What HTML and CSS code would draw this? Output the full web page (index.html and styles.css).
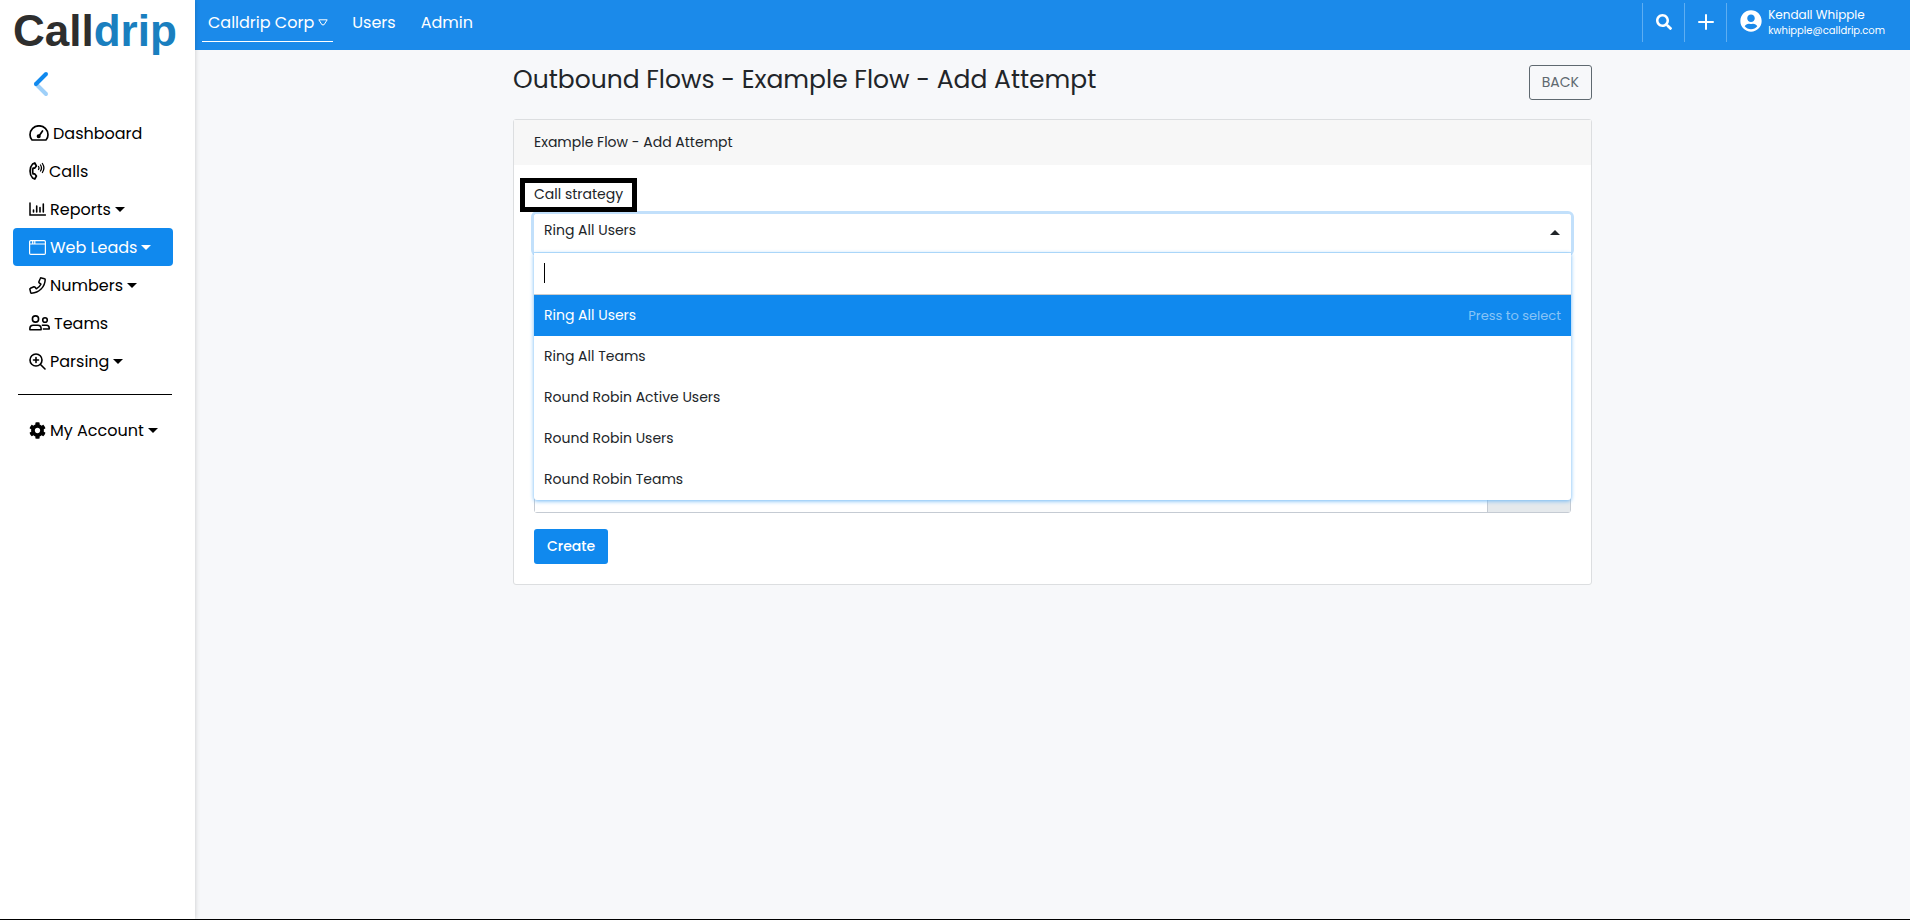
FILE: index.html
```html
<!DOCTYPE html>
<html lang="en">
<head>
  <meta charset="UTF-8" />
  <meta name="viewport" content="width=device-width, initial-scale=1.0"/>
  <title>Calldrip - Add Attempt</title>
  <link rel="stylesheet" href="styles.css">
</head>
<body>
  <aside class="sidebar">
    <a href="#" class="logo">Call<span>drip</span></a>
    <button type="button" class="collapse" aria-label="Collapse menu">
      <svg width="16" height="26" viewBox="0 0 16 26" fill="none" stroke-width="4" stroke-linecap="round">
        <path d="M3 13l10 10" stroke="#9fd0f9"/>
        <path d="M13 3L3 13" stroke="#1089ee"/>
      </svg>
    </button>
    <nav class="menu">
      <a href="#">
        <svg width="20" height="16" viewBox="0 0 20 16" fill="none" stroke="currentColor" stroke-width="1.7" stroke-linecap="round" stroke-linejoin="round">
          <path d="M3 15C1.600 13.600 1 11.800 1 9.800a9 9 0 0 1 18 0c0 2-.6 3.800-2 5.200z"/>
          <path d="M10 11l3.500-5"/>
          <circle cx="9.700" cy="11.200" r="1.200" fill="currentColor"/>
        </svg>
        Dashboard
      </a>
      <a href="#">
        <svg width="16" height="18" viewBox="0 0 16 18" fill="none" stroke="currentColor" stroke-width="1.700" stroke-linecap="round" stroke-linejoin="round">
          <path d="M5.800 1L3.600 2C.2 5.500.2 12.500 3.600 16l2.200 1 1.600-3-1.800-2.200-1.500.2c-.6-2-.6-4 0-6l1.500.2L7.400 4z"/>
          <path d="M9.500 4.500q1 1.500 0 3M11.500 3q2 3 0 6M13.400 1.500q3 4.500 0 9" stroke-width="1.300"/>
        </svg>
        Calls
      </a>
      <a href="#">
        <svg width="17" height="14" viewBox="0 0 17 14" fill="none" stroke="currentColor" stroke-width="1.500" stroke-linecap="round">
          <path d="M1 1v12h15.500"/>
          <path d="M4.500 8v2M7.700 4v6M11 5.500V10M14.300 2v8" stroke-width="1.600"/>
        </svg>
        Reports <i class="caret"></i>
      </a>
      <a href="#" class="active">
        <svg width="17" height="15" viewBox="0 0 17 15" fill="none" stroke="currentColor" stroke-width="1.200">
          <rect x=".6" y=".6" width="15.800" height="13.800" rx="1.200"/>
          <path d="M1 4h15M3.700 1v3M5.800 1v3"/>
        </svg>
        Web Leads <i class="caret"></i>
      </a>
      <a href="#">
        <svg width="17" height="17" viewBox="0 0 17 17" fill="none" stroke="currentColor" stroke-width="1.500" stroke-linejoin="round">
          <path d="M12.300.9l3.300.8c.5 0 .6.400.6.800C16 10 10 16 2.500 16.200c-.4 0-.7-.2-.8-.6L.9 12.300c-.1-.4.1-.8.5-1l3.500-1.500c.4-.1.700 0 1 .3l1.400 1.700c2-1 3.600-2.500 4.600-4.600l-1.700-1.400c-.3-.2-.4-.6-.3-1l1.500-3.500c.1-.3.500-.5.900-.4z"/>
        </svg>
        Numbers <i class="caret"></i>
      </a>
      <a href="#">
        <svg width="21" height="16" viewBox="0 0 21 16" fill="none" stroke="currentColor" stroke-width="1.600" stroke-linejoin="round">
          <circle cx="6.500" cy="4" r="3.100"/>
          <circle cx="16" cy="5" r="2.300"/>
          <path d="M.9 14.800v-1.300c0-2 1.500-3.300 3.300-3.300h4.600c1.800 0 3.300 1.300 3.300 3.300v1.300zM12.800 10.200h4.700c1.700 0 2.700 1.100 2.700 2.700v1.100h-6.400"/>
        </svg>
        Teams
      </a>
      <a href="#">
        <svg width="17" height="17" viewBox="0 0 17 17" fill="none" stroke="currentColor" stroke-width="1.600" stroke-linecap="round">
          <circle cx="7" cy="7" r="6"/>
          <path d="M11.500 11.500L16 16M7 4.500v5M4.500 7h5"/>
        </svg>
        Parsing <i class="caret"></i>
      </a>
      <hr>
      <a href="#">
        <svg width="17" height="17" viewBox="0 0 512 512" fill="currentColor">
          <path d="M487.400 315.700l-42.600-24.600c4.300-23.200 4.300-47 0-70.200l42.600-24.600c4.900-2.800 7.100-8.600 5.500-14-11.100-35.600-30-67.800-54.700-94.600-3.800-4.100-10-5.100-14.800-2.300L380.800 110c-17.900-15.400-38.500-27.300-60.800-35.100V25.800c0-5.600-3.900-10.500-9.400-11.700-36.700-8.200-74.300-7.800-109.200 0-5.500 1.200-9.400 6.100-9.400 11.700V75c-22.200 7.900-42.800 19.800-60.800 35.100L88.700 85.500c-4.900-2.800-11-1.900-14.800 2.300-24.700 26.700-43.600 58.900-54.700 94.600-1.700 5.400.6 11.200 5.500 14L67.300 221c-4.300 23.200-4.300 47 0 70.200l-42.600 24.600c-4.900 2.800-7.100 8.600-5.500 14 11.100 35.600 30 67.800 54.700 94.600 3.800 4.100 10 5.100 14.800 2.300l42.600-24.600c17.900 15.400 38.500 27.300 60.800 35.100v49.200c0 5.600 3.900 10.500 9.400 11.700 36.700 8.200 74.300 7.800 109.200 0 5.500-1.200 9.400-6.100 9.400-11.700v-49.200c22.200-7.900 42.800-19.800 60.800-35.100l42.600 24.600c4.900 2.800 11 1.900 14.800-2.300 24.700-26.700 43.600-58.900 54.700-94.600 1.500-5.500-.7-11.300-5.600-14.100zM256 336c-44.100 0-80-35.900-80-80s35.900-80 80-80 80 35.900 80 80-35.900 80-80 80z"/>
        </svg>
        My Account <i class="caret"></i>
      </a>
    </nav>
  </aside>

  <div class="page">
    <header class="topbar">
      <nav class="topnav">
        <a href="#" class="current">Calldrip Corp
          <svg width="10" height="7" viewBox="0 0 10 7" fill="none" stroke="currentColor" stroke-linejoin="round"><path d="M.8.800h8.400L6 5.800H4z"/></svg>
        </a>
        <a href="#">Users</a>
        <a href="#">Admin</a>
      </nav>
      <div class="tools">
        <button type="button" class="tool" aria-label="Search">
          <svg width="16" height="16" viewBox="0 0 512 512" fill="currentColor"><path d="M505 442.700L405.300 343c-4.500-4.500-10.600-7-17-7H372c27.600-35.300 44-79.700 44-128C416 93.100 322.900 0 208 0S0 93.100 0 208s93.100 208 208 208c48.300 0 92.700-16.400 128-44v16.300c0 6.400 2.500 12.500 7 17l99.700 99.700c9.400 9.400 24.600 9.400 33.900 0l28.300-28.300c9.400-9.400 9.400-24.600.1-34zM208 336c-70.700 0-128-57.200-128-128 0-70.700 57.200-128 128-128 70.700 0 128 57.200 128 128 0 70.700-57.200 128-128 128z"/></svg>
        </button>
        <button type="button" class="tool" aria-label="Add">
          <svg width="16" height="16" viewBox="0 0 16 16" stroke="currentColor" stroke-width="2" stroke-linecap="round"><path d="M8 1v14M1 8h14"/></svg>
        </button>
        <a href="#" class="user">
          <svg width="22" height="22" viewBox="0 0 496 512" fill="currentColor"><path d="M248 8C111 8 0 119 0 256s111 248 248 248 248-111 248-248S385 8 248 8zm0 96c48.600 0 88 39.400 88 88s-39.400 88-88 88-88-39.400-88-88 39.400-88 88-88zm0 344c-58.700 0-111.300-26.600-146.500-68.200 18.800-35.400 55.600-59.800 98.500-59.800 2.400 0 4.800.4 7.100 1.100 13 4.200 26.600 6.900 40.900 6.900 14.300 0 28-2.700 40.900-6.900 2.300-.7 4.700-1.100 7.100-1.100 42.900 0 79.700 24.400 98.500 59.800C359.300 421.400 306.700 448 248 448z"/></svg>
          <span class="who">
            <strong>Kendall Whipple</strong>
            <small>kwhipple@calldrip.com</small>
          </span>
        </a>
      </div>
    </header>

    <main class="container">
      <div class="title-row">
        <h1>Outbound Flows - Example Flow - Add Attempt</h1>
        <button type="button" class="btn-outline">BACK</button>
      </div>

      <section class="card">
        <div class="card-header">Example Flow - Add Attempt</div>
        <form class="card-body">
          <label for="strategy" class="highlight">Call strategy</label>
          <div class="dropdown">
            <select id="strategy" name="strategy">
              <option>Ring All Users</option>
              <option>Ring All Teams</option>
              <option>Round Robin Active Users</option>
              <option>Round Robin Users</option>
              <option>Round Robin Teams</option>
            </select>
            <i class="caret up"></i>
            <div class="dropdown-menu">
              <input type="text" class="search" aria-label="Search strategies">
              <ul>
                <li class="selected">Ring All Users <span>Press to select</span></li>
                <li>Ring All Teams</li>
                <li>Round Robin Active Users</li>
                <li>Round Robin Users</li>
                <li>Round Robin Teams</li>
              </ul>
            </div>
          </div>
          <div class="input-group">
            <input type="text" name="delay" aria-label="Delay">
            <span class="addon"></span>
          </div>
          <button type="submit" class="btn">Create</button>
        </form>
      </section>
    </main>
  </div>
</body>
</html>
```
FILE: styles.css
```css
* {
  box-sizing: border-box;
}

body {
  margin: 0;
  display: flex;
  min-height: 100vh;
  font-family: Poppins, Inter, sans-serif;
  font-size: 14px;
  line-height: 21px;
  color: #212529;
  background-color: #f7f8fa;
  border-bottom: 1px solid #000;
}

a {
  color: inherit;
  text-decoration: none;
}

button, input, select {
  font: inherit;
  color: inherit;
}

svg {
  flex: none;
}

/* Sidebar */
.sidebar {
  width: 195px;
  flex: none;
  background-color: #fff;
  box-shadow: 0 0 5px rgba(0, 0, 0, 0.2);
  position: relative;
}

.logo {
  display: block;
  padding: 6px 0 0 13px;
  font-family: "Liberation Sans", sans-serif;
  font-size: 44px;
  line-height: 49px;
  font-weight: bold;
  color: #2e2e2e;
}

.logo span {
  color: #1a7fbf;
}

.collapse {
  display: block;
  margin: 16px 0 0 33px;
  padding: 0;
  border: none;
  background: none;
  height: 26px;
  cursor: pointer;
}

.menu {
  padding: 17px 22px 0 13px;
}

.menu a {
  display: flex;
  align-items: center;
  gap: 4px;
  height: 38px;
  padding: 0 16px;
  border-radius: 4px;
  font-size: 16px;
  color: #000;
  white-space: nowrap;
}

.menu a.active {
  background-color: #1089ee;
  color: #fff;
}

.menu hr {
  margin: 14px 1px 16px 5px;
  border: none;
  border-top: 1px solid #000;
}

.caret {
  width: 0;
  height: 0;
  border: 5px solid transparent;
  border-top-color: currentColor;
  border-bottom: none;
}

.caret.up {
  border-bottom: 5px solid #212529;
  border-top: none;
}

/* Top bar */
.page {
  flex: 1;
  min-width: 0;
}

.topbar {
  display: flex;
  justify-content: space-between;
  height: 50px;
  background-color: #1b8aea;
  color: #fff;
}

.topnav {
  display: flex;
  gap: 13px;
  padding-left: 7px;
  height: 42px;
  font-size: 16px;
}

.topnav a {
  display: flex;
  align-items: center;
  gap: 4px;
  padding: 3px 6px 0 6px;
}

.topnav .current {
  padding-right: 5px;
  border-bottom: 1px solid #fff;
}

.tools {
  display: flex;
  padding: 3px 25px 8px 0;
}

.tool {
  width: 42px;
  padding: 0 0 2px;
  border: none;
  border-left: 1px solid #5eaef2;
  background: none;
  color: #fff;
  cursor: pointer;
}

.tool svg {
  display: block;
  margin: 0 auto;
}

.user {
  display: flex;
  gap: 6px;
  padding: 7px 0 0 13px;
  border-left: 1px solid #5eaef2;
}

.who {
  display: flex;
  flex-direction: column;
  line-height: 16px;
  margin-top: -3px;
}

.who strong {
  font-size: 12px;
  font-weight: 400;
}

.who small {
  font-size: 10px;
}

/* Content */
.container {
  max-width: 1079px;
  margin: 0 auto;
}

.title-row {
  display: flex;
  justify-content: space-between;
  padding: 15px 0 19px;
}

h1 {
  margin: 0;
  font-size: 25px;
  line-height: 29px;
  font-weight: 400;
}

.btn, .btn-outline {
  height: 35px;
  padding: 0 12px;
  border-radius: 3px;
  cursor: pointer;
}

.btn {
  padding: 0 13px;
  border: none;
  background-color: #1089ee;
  color: #fff;
  font-weight: 500;
}

.btn-outline {
  border: 1px solid #5f6970;
  background: none;
  color: #5f6970;
}

.card {
  border: 1px solid #dcdee0;
  border-radius: 3px;
  background-color: #fff;
}

.card-header {
  padding: 12px 20px;
  background-color: #f7f7f7;
}

.card-body {
  padding: 13px 20px 20px;
}

/* boxed label, hangs out over the padding */
.highlight {
  display: block;
  width: fit-content;
  margin: 0 0 2px -14px;
  padding: 1px 9px 2px;
  border: 5px solid #000;
  position: relative;
  z-index: 2;
}

.dropdown {
  position: relative;
  border-radius: 3px;
  box-shadow: 0 0 0 3px #c2e0fb;
}

.dropdown select {
  display: block;
  width: 100%;
  height: 39px;
  padding: 0 10px 5px;
  border: none;
  border-bottom: 1px solid #bfe0fa;
  border-radius: 3px 3px 0 0;
  background-color: #fff;
  appearance: none;
  outline: none;
}

.dropdown .caret.up {
  position: absolute;
  top: 16px;
  right: 11px;
}

.dropdown-menu {
  position: absolute;
  top: 100%;
  left: 0;
  right: 0;
  background-color: #fff;
  border-radius: 0 0 3px 3px;
  box-shadow: 0 1px 4px #6cb6f5;
}

/* text cursor sits at the start of the empty search box */
.search {
  display: block;
  width: 100%;
  height: 42px;
  padding: 10px;
  border: none;
  border-bottom: 1px solid #ccc;
  outline: none;
  background: linear-gradient(#000, #000) 10px 10px / 1px 20px no-repeat #fff;
}

.dropdown-menu ul {
  margin: 0;
  padding: 0;
  list-style: none;
}

.dropdown-menu li {
  display: flex;
  justify-content: space-between;
  padding: 10px;
}

.dropdown-menu .selected {
  background-color: #1089ee;
  color: #fff;
}

.selected span {
  font-size: 13px;
  color: #88c4f7;
}

.input-group {
  display: flex;
  height: 39px;
  margin: 221px 0 16px;
  border: 1px solid #c5cbd3;
  border-radius: 3px;
}

.input-group input {
  flex: 1;
  min-width: 0;
  border: none;
}

.addon {
  width: 83px;
  border-left: 1px solid #c5cbd3;
  background-color: #e5e9ec;
}
```
